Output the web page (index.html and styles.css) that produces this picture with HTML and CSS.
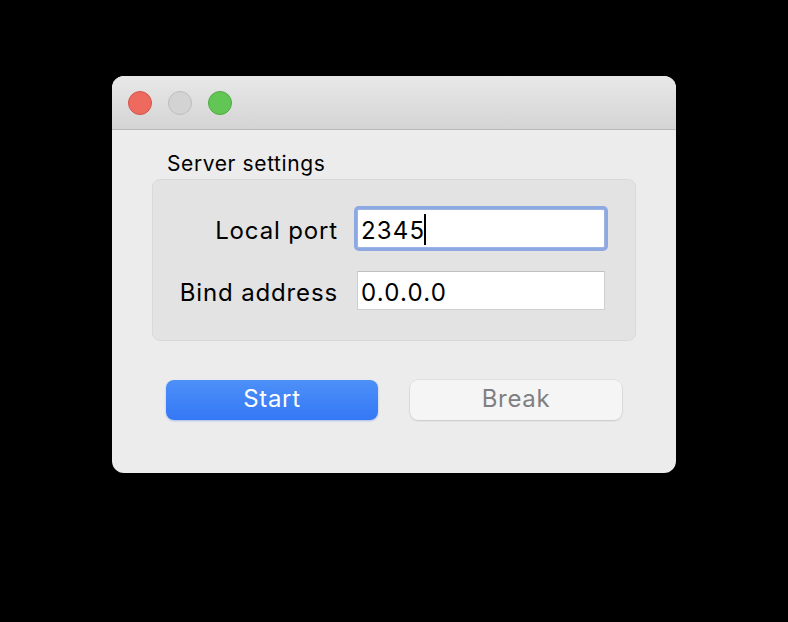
FILE: index.html
```html
<!DOCTYPE html>
<html>
<head>
<meta charset="utf-8">
<link rel="stylesheet" href="styles.css">
</head>
<body>
<div class="stage">
  <div class="window">
    <div class="titlebar">
      <span class="light red"></span>
      <span class="light grey"></span>
      <span class="light green"></span>
    </div>
    <div class="content">
      <div class="group-title">Server settings</div>
      <div class="group">
        <label class="label">Local port</label>
        <div class="field focused">2345<span class="caret"></span></div>
        <label class="label">Bind address</label>
        <div class="field">0.0.0.0</div>
      </div>
      <div class="buttons">
        <button class="btn primary">Start</button>
        <button class="btn disabled">Break</button>
      </div>
    </div>
  </div>
</div>
</body>
</html>
```

FILE: styles.css
```css
html, body {
  margin: 0;
  padding: 0;
  background: #000;
}
.stage {
  width: 788px;
  height: 622px;
  padding: 76px 0 0 112px;
  box-sizing: border-box;
  font-family: Inter, "Liberation Sans", sans-serif;
}
.window {
  width: 564px;
  height: 397px;
  border-radius: 12px;
  background: #ececec;
  overflow: hidden;
  display: flex;
  flex-direction: column;
}
.titlebar {
  height: 54px;
  box-sizing: border-box;
  background: linear-gradient(#e8e8e8, #d4d4d4);
  border-bottom: 1px solid #b9b9b9;
  display: flex;
  align-items: center;
  padding: 0 0 0 16px;
  gap: 16px;
}
.light {
  width: 24px;
  height: 24px;
  border-radius: 50%;
  box-sizing: border-box;
  display: block;
}
.red { background: #ee6a5f; border: 1px solid #d35449; }
.grey { background: #d3d3d3; border: 1px solid #bdbdbd; }
.green { background: #62c655; border: 1px solid #50a944; }

.content {
  padding: 21px 40px 0 40px;
  display: flex;
  flex-direction: column;
}
.group-title {
  font-size: 21px;
  font-weight: 425;
  letter-spacing: 0.6px;
  line-height: 26px;
  color: #000;
  padding-left: 15px;
  margin-bottom: 2px;
}
.group {
  width: 484px;
  height: 162px;
  box-sizing: border-box;
  background: #e3e3e3;
  border: 1px solid #d9d9d9;
  border-radius: 8px;
  display: grid;
  grid-template-columns: 185px 248px;
  column-gap: 19px;
  row-gap: 23px;
  align-items: center;
  align-content: start;
  padding-top: 29px;
}
.label {
  justify-self: end;
  font-size: 24px;
  font-weight: 425;
  letter-spacing: 0.85px;
  color: #000;
  padding-top: 3px;
}
.field {
  height: 39px;
  box-sizing: border-box;
  background: #fff;
  border: 1px solid #cfcfcf;
  border-top-color: #c0c0c0;
  font-size: 24px;
  font-weight: 425;
  letter-spacing: 1.2px;
  line-height: 37px;
  color: #000;
  padding: 3px 0 0 3px;
  display: flex;
  align-items: center;
}
.field.focused {
  border-color: #9db3e3;
  box-shadow: 0 0 0 3px #8ea9e2;
  border-radius: 2px;
}
.caret {
  display: inline-block;
  width: 1.5px;
  height: 31px;
  background: #000;
  margin: -2px 0 0 -1px;
}
.buttons {
  display: flex;
  gap: 32px;
  padding: 39px 0 0 14px;
}
.btn {
  width: 212px;
  height: 40px;
  border-radius: 8px;
  font-family: Inter, "Liberation Sans", sans-serif;
  font-size: 24px;
  font-weight: 425;
  letter-spacing: 0.65px;
  line-height: 38px;
  border: none;
  padding: 0 0 2px;
}
.btn.primary {
  background: linear-gradient(#4d90f8, #3478f6);
  color: #fff;
  box-shadow: 0 1px 2px rgba(40, 100, 220, 0.35);
}
.btn.disabled {
  background: #f5f5f5;
  color: #808080;
  box-shadow: 0 0 0 0.5px rgba(0,0,0,0.08), 0 1px 2px rgba(0,0,0,0.12);
}
```
